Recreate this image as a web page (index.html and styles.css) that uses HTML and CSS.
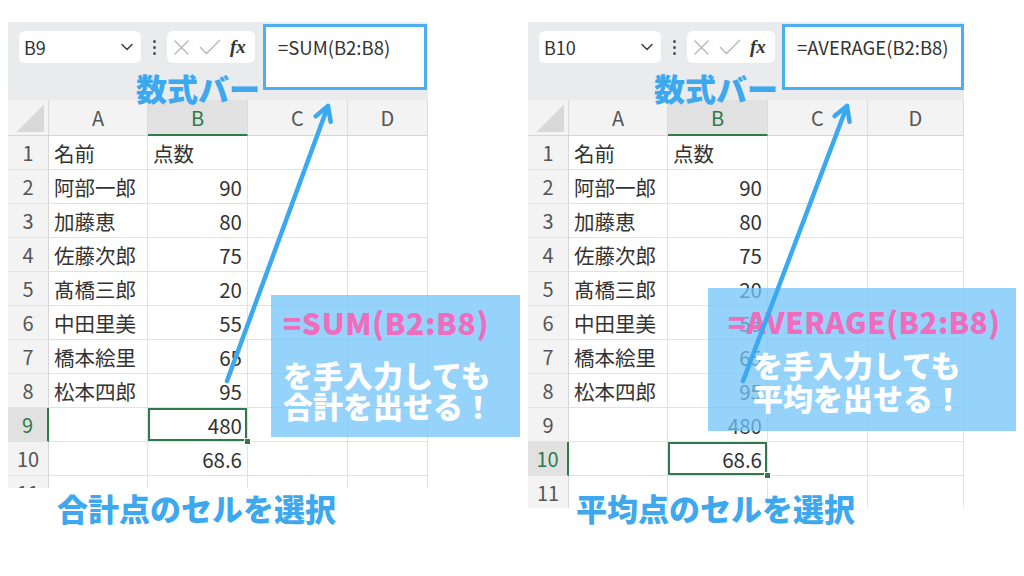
FILE: index.html
```html
<!DOCTYPE html>
<html lang="ja">
<head>
<meta charset="utf-8">
<title>SUM / AVERAGE 数式バー</title>
<link rel="stylesheet" href="styles.css">
</head>
<body>
<main class="stage">
  <section class="sheet sheet-sum">
    <div class="fbar">
      <div class="namebox"><span>B9</span><svg class="chev" width="12" height="8" viewBox="0 0 12 8"><path d="M1 1.5 L6 6.5 L11 1.5" fill="none" stroke="#444" stroke-width="1.6" stroke-linecap="round" stroke-linejoin="round"/></svg></div>
      <div class="kebab"><i></i><i></i><i></i></div>
      <div class="fxbox">
        <svg width="17" height="17" viewBox="0 0 17 17"><path d="M1.5 1.5 L15.5 15.5 M15.5 1.5 L1.5 15.5" stroke="#b4b4b4" stroke-width="1.3" fill="none"/></svg>
        <svg width="22" height="16" viewBox="0 0 22 16"><path d="M1 8 L7.5 14.5 L21 1" stroke="#b4b4b4" stroke-width="1.3" fill="none"/></svg>
        <span class="fx">fx</span>
      </div>
      <div class="formula">=SUM(B2:B8)</div>
    </div>
    <div class="grid">
      <div class="corner"></div><div class="ch">A</div><div class="ch sel">B</div><div class="ch">C</div><div class="ch">D</div>
      <div class="rh">1</div><div class="c">名前</div><div class="c">点数</div><div class="c"></div><div class="c"></div>
      <div class="rh">2</div><div class="c">阿部一郎</div><div class="c num">90</div><div class="c"></div><div class="c"></div>
      <div class="rh">3</div><div class="c">加藤恵</div><div class="c num">80</div><div class="c"></div><div class="c"></div>
      <div class="rh">4</div><div class="c">佐藤次郎</div><div class="c num">75</div><div class="c"></div><div class="c"></div>
      <div class="rh">5</div><div class="c">髙橋三郎</div><div class="c num">20</div><div class="c"></div><div class="c"></div>
      <div class="rh">6</div><div class="c">中田里美</div><div class="c num">55</div><div class="c"></div><div class="c"></div>
      <div class="rh">7</div><div class="c">橋本絵里</div><div class="c num">65</div><div class="c"></div><div class="c"></div>
      <div class="rh">8</div><div class="c">松本四郎</div><div class="c num">95</div><div class="c"></div><div class="c"></div>
      <div class="rh sel">9</div><div class="c"></div><div class="c num cell-sel">480</div><div class="c"></div><div class="c"></div>
      <div class="rh">10</div><div class="c"></div><div class="c num">68.6</div><div class="c"></div><div class="c"></div>
      <div class="rh">11</div><div class="c"></div><div class="c"></div><div class="c"></div><div class="c"></div>
    </div>
  </section>

  <section class="sheet sheet-avg">
    <div class="fbar">
      <div class="namebox"><span>B10</span><svg class="chev" width="12" height="8" viewBox="0 0 12 8"><path d="M1 1.5 L6 6.5 L11 1.5" fill="none" stroke="#444" stroke-width="1.6" stroke-linecap="round" stroke-linejoin="round"/></svg></div>
      <div class="kebab"><i></i><i></i><i></i></div>
      <div class="fxbox">
        <svg width="17" height="17" viewBox="0 0 17 17"><path d="M1.5 1.5 L15.5 15.5 M15.5 1.5 L1.5 15.5" stroke="#b4b4b4" stroke-width="1.3" fill="none"/></svg>
        <svg width="22" height="16" viewBox="0 0 22 16"><path d="M1 8 L7.5 14.5 L21 1" stroke="#b4b4b4" stroke-width="1.3" fill="none"/></svg>
        <span class="fx">fx</span>
      </div>
      <div class="formula">=AVERAGE(B2:B8)</div>
    </div>
    <div class="grid">
      <div class="corner"></div><div class="ch">A</div><div class="ch sel">B</div><div class="ch">C</div><div class="ch">D</div>
      <div class="rh">1</div><div class="c">名前</div><div class="c">点数</div><div class="c"></div><div class="c"></div>
      <div class="rh">2</div><div class="c">阿部一郎</div><div class="c num">90</div><div class="c"></div><div class="c"></div>
      <div class="rh">3</div><div class="c">加藤恵</div><div class="c num">80</div><div class="c"></div><div class="c"></div>
      <div class="rh">4</div><div class="c">佐藤次郎</div><div class="c num">75</div><div class="c"></div><div class="c"></div>
      <div class="rh">5</div><div class="c">髙橋三郎</div><div class="c num">20</div><div class="c"></div><div class="c"></div>
      <div class="rh">6</div><div class="c">中田里美</div><div class="c num">55</div><div class="c"></div><div class="c"></div>
      <div class="rh">7</div><div class="c">橋本絵里</div><div class="c num">65</div><div class="c"></div><div class="c"></div>
      <div class="rh">8</div><div class="c">松本四郎</div><div class="c num">95</div><div class="c"></div><div class="c"></div>
      <div class="rh">9</div><div class="c"></div><div class="c num">480</div><div class="c"></div><div class="c"></div>
      <div class="rh sel">10</div><div class="c"></div><div class="c num cell-sel">68.6</div><div class="c"></div><div class="c"></div>
      <div class="rh">11</div><div class="c"></div><div class="c"></div><div class="c"></div><div class="c"></div>
    </div>
  </section>
</main>

<div class="bar-label bar-label-sum">数式バー</div>
<div class="bar-label bar-label-avg">数式バー</div>

<div class="callout callout-sum">
  <p class="c-formula">=SUM(B2:B8)</p>
  <p class="c-text">を手入力しても<br>合計を出せる！</p>
</div>
<div class="callout callout-avg">
  <p class="c-formula">=AVERAGE(B2:B8)</p>
  <p class="c-text">を手入力しても<br>平均を出せる！</p>
</div>

<svg class="arrows" width="1024" height="576" viewBox="0 0 1024 576">
  <g fill="none" stroke="#3aa9f0" stroke-width="4.5" stroke-linecap="round" stroke-linejoin="round">
    <line x1="227" y1="381" x2="328" y2="106"/>
    <polyline points="315.7,116.2 328,106 330.7,121.8"/>
    <line x1="743" y1="381" x2="847" y2="106"/>
    <polyline points="834.6,116.1 847,106 849.6,121.8"/>
  </g>
</svg>

<div class="pick-label pick-label-sum">合計点のセルを選択</div>
<div class="pick-label pick-label-avg">平均点のセルを選択</div>
</body>
</html>
```
FILE: styles.css
```css
body {
  margin: 0;
  width: 1024px;
  height: 576px;
  position: relative;
  overflow: hidden;
  background: #fff;
  font-family: "Noto Sans CJK JP", "Noto Sans", sans-serif;
}

.stage {
  display: flex;
  align-items: flex-start;
  gap: 100px;
  padding: 22px 0 0 8px;
}

.sheet {
  display: flex;
  flex-direction: column;
  overflow: hidden;
  background: #fff;
}
.sheet-sum { width: 420px; height: 466px; }
.sheet-avg { width: 436px; height: 486px; }

/* formula bar */
.fbar {
  flex: none;
  height: 78px;
  box-sizing: border-box;
  background: #eaebed;
  display: flex;
  align-items: flex-start;
  padding: 2px 1px 0 11px;
}
.sheet-avg .fbar { padding-right: 0; }

.namebox {
  margin-top: 7px;
  width: 122px;
  height: 32px;
  box-sizing: border-box;
  background: #fff;
  border-radius: 6px;
  display: flex;
  align-items: center;
  justify-content: space-between;
  padding: 0 8px 0 5px;
  font-size: 18px;
  line-height: 32px;
  color: #333;
}

.kebab {
  margin-top: 7px;
  width: 26px;
  height: 32px;
  display: flex;
  flex-direction: column;
  align-items: center;
  justify-content: center;
  gap: 3px;
}
.kebab i {
  display: block;
  width: 3px;
  height: 3px;
  border-radius: 50%;
  background: #555;
}

.fxbox {
  margin-top: 7px;
  width: 88px;
  height: 32px;
  box-sizing: border-box;
  background: #fff;
  border-radius: 6px;
  display: flex;
  align-items: center;
  gap: 9px;
  padding-left: 6px;
}
.fx {
  font-family: "Liberation Serif", serif;
  font-style: italic;
  font-weight: bold;
  font-size: 19px;
  color: #333;
}

.formula {
  flex: 1;
  margin-left: 8px;
  height: 66px;
  box-sizing: border-box;
  background: #fff;
  border: 3px solid #4cb0ee;
  padding: 8px 0 0 12px;
  font-size: 18.5px;
  line-height: 24px;
  color: #333;
}
.sheet-avg .formula { margin-left: 7px; }

/* grid */
.grid {
  display: grid;
  grid-template-columns: 41px 99px 100px 100px 1fr;
  grid-template-rows: 36px;
  grid-auto-rows: 34px;
}
.grid > div {
  box-sizing: border-box;
  border-right: 1px solid #e2e2e2;
  border-bottom: 1px solid #e2e2e2;
  display: flex;
  align-items: center;
  padding: 0 5px;
  font-size: 20.5px;
  color: #333;
  white-space: nowrap;
}
.grid > .corner {
  background: #f3f3f3 linear-gradient(to bottom right, transparent 50%, #d9d9d9 50%) no-repeat right 4px bottom 3px / 27px 28px;
  border-bottom-color: #d6d6d6;
  border-right-color: #dadada;
}
.grid > .ch {
  background: #f3f3f3;
  justify-content: center;
  color: #555;
  font-size: 20px;
  border-bottom-color: #d6d6d6;
  border-right-color: #dcdcdc;
}
.grid > .ch.sel {
  background: #e1e1e1;
  color: #2f7a4a;
  border-bottom: 2px solid #2f7a4a;
}
.grid > .rh {
  background: #f3f3f3;
  justify-content: center;
  padding: 0;
  color: #555;
  font-size: 20px;
  border-right-color: #d6d6d6;
}
.grid > .rh.sel {
  background: #e1e1e1;
  color: #2f7a4a;
  border-right: 2px solid #2f7a4a;
}
.grid > .num { justify-content: flex-end; }
.grid > .cell-sel {
  position: relative;
  box-shadow: inset 0 0 0 2px #2f7a4a;
}
.cell-sel::after {
  content: "";
  position: absolute;
  right: -4px;
  bottom: -4px;
  width: 5px;
  height: 5px;
  background: #2f7a4a;
  border: 1px solid #fff;
}

/* annotations */
.bar-label {
  position: absolute;
  top: 72px;
  font-size: 31px;
  line-height: 31px;
  font-weight: 900;
  color: #3ea8ee;
  white-space: nowrap;
}
.bar-label-sum { left: 136px; }
.bar-label-avg { left: 654px; }

.callout {
  position: absolute;
  box-sizing: border-box;
  background: rgba(115, 196, 250, 0.75);
  font-weight: 900;
  white-space: nowrap;
}
.callout p { margin: 0; }
.c-formula {
  font-size: 30px;
  line-height: 36px;
  color: #f06cbc;
  letter-spacing: 0.6px;
}
.c-text {
  margin-top: 19px;
  font-size: 30px;
  line-height: 31px;
  color: #fff;
}
.callout-sum {
  left: 271px;
  top: 295px;
  width: 249px;
  height: 142px;
  padding: 9px 0 0 12px;
}
.callout-sum .c-text { margin-top: 19px; }
.callout-avg {
  left: 708px;
  top: 288px;
  width: 308px;
  height: 143px;
  padding: 15px 0 0 20px;
}
.callout-avg .c-formula {
  font-size: 29.5px;
  letter-spacing: 0.5px;
}
.callout-avg .c-text {
  margin: 9px 0 0 25px;
  line-height: 33px;
}

.arrows {
  position: absolute;
  left: 0;
  top: 0;
  pointer-events: none;
}

.pick-label {
  position: absolute;
  top: 492px;
  font-size: 31px;
  line-height: 31px;
  font-weight: 900;
  color: #3ea8ee;
  white-space: nowrap;
}
.pick-label-sum { left: 57px; }
.pick-label-avg { left: 576px; }
```
